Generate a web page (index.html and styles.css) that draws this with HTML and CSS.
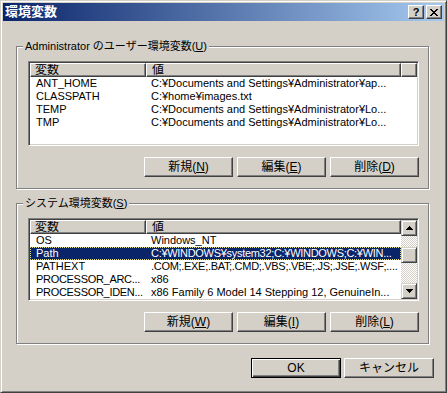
FILE: index.html
```html
<!DOCTYPE html>
<html lang="ja">
  <head>
    <meta charset="UTF-8" />
    <title>環境変数</title>
    <link rel="stylesheet" href="styles.css">
  </head>
  <body>
    <div class="window">
      <div class="titlebar">
        <span class="title">環境変数</span>
        <div class="caption-btns">
          <button class="cap-btn">?</button>
          <button class="cap-btn">
            <svg width="8" height="7" viewBox="0 0 8 7" shape-rendering="crispEdges">
              <path d="M0 0h2v1h1v1h2V1h1V0h2v1H7v1H6v1H5v1h1v1h1v1h1v1H6V6H5V5H3v1H2v1H0V6h1V5h1V4h1V3H2V2H1V1H0z" />
            </svg>
          </button>
        </div>
      </div>

      <div class="dialog">
        <!-- User variables -->
        <fieldset class="group">
          <legend>Administrator のユーザー環境変数(<u>U</u>)</legend>
          <div class="listview user-list">
            <div class="lv-main">
              <div class="lv-head">
                <div class="hcell c1">変数</div>
                <div class="hcell c2">値</div>
                <div class="hcell fill"></div>
              </div>
              <div class="row"><span class="c1">ANT_HOME</span><span class="c2">C:¥Documents and Settings¥Administrator¥ap...</span></div>
              <div class="row"><span class="c1">CLASSPATH</span><span class="c2">C:¥home¥images.txt</span></div>
              <div class="row"><span class="c1">TEMP</span><span class="c2">C:¥Documents and Settings¥Administrator¥Lo...</span></div>
              <div class="row"><span class="c1">TMP</span><span class="c2">C:¥Documents and Settings¥Administrator¥Lo...</span></div>
            </div>
          </div>
          <div class="btn-row">
            <button class="btn">新規(<u>N</u>)</button>
            <button class="btn">編集(<u>E</u>)</button>
            <button class="btn">削除(<u>D</u>)</button>
          </div>
        </fieldset>

        <!-- System variables -->
        <fieldset class="group">
          <legend>システム環境変数(<u>S</u>)</legend>
          <div class="listview sys-list">
            <div class="lv-main">
              <div class="lv-head">
                <div class="hcell c1">変数</div>
                <div class="hcell c2">値</div>
              </div>
              <div class="row"><span class="c1">OS</span><span class="c2">Windows_NT</span></div>
              <div class="row sel"><span class="c1">Path</span><span class="c2 tight">C:¥WINDOWS¥system32;C:¥WINDOWS;C:¥WIN...</span></div>
              <div class="row"><span class="c1">PATHEXT</span><span class="c2 tight">.COM;.EXE;.BAT;.CMD;.VBS;.VBE;.JS;.JSE;.WSF;....</span></div>
              <div class="row"><span class="c1 tight">PROCESSOR_ARC...</span><span class="c2">x86</span></div>
              <div class="row"><span class="c1 tight">PROCESSOR_IDEN...</span><span class="c2">x86 Family 6 Model 14 Stepping 12, GenuineIn...</span></div>
              <div class="row"><span class="c1 tight">PROCESSOR_LEVEL</span><span class="c2">6</span></div>
            </div>
            <div class="scrollbar">
              <div class="sb-btn">
                <svg width="7" height="4" viewBox="0 0 7 4" shape-rendering="crispEdges"><path d="M3 0h1v1h1v1h1v1h1v1H0V3h1V2h1V1h1z" /></svg>
              </div>
              <div class="sb-track"><div class="sb-thumb"></div></div>
              <div class="sb-btn">
                <svg width="7" height="4" viewBox="0 0 7 4" shape-rendering="crispEdges"><path d="M0 0h7v1H6v1H5v1H4v1H3V3H2V2H1V1H0z" /></svg>
              </div>
            </div>
          </div>
          <div class="btn-row">
            <button class="btn">新規(<u>W</u>)</button>
            <button class="btn">編集(<u>I</u>)</button>
            <button class="btn">削除(<u>L</u>)</button>
          </div>
        </fieldset>

        <div class="footer">
          <button class="btn default">OK</button>
          <button class="btn">キャンセル</button>
        </div>
      </div>
    </div>
  </body>
</html>
```

FILE: styles.css
```css
body {
  margin: 0;
  font-family: "Liberation Sans", "Noto Sans CJK JP", sans-serif;
  font-size: 11px;
  color: #000;
  background: #d4d0c8;
}
.window {
  width: 447px;
  height: 393px;
  box-sizing: border-box;
  background: #d4d0c8;
  border: 1px solid;
  border-color: #d4d0c8 #404040 #404040 #d4d0c8;
  box-shadow: inset 1px 1px #fff, inset -1px -1px #808080;
  padding: 2px;
  display: flex;
  flex-direction: column;
}
.titlebar {
  height: 18px;
  display: flex;
  align-items: center;
  justify-content: space-between;
  padding: 0 2px;
  background: linear-gradient(to right, #0a246a, #a6caf0);
}
.title {
  color: #fff;
  font-weight: bold;
  font-size: 13px;
  line-height: 18px;
}
.caption-btns {
  display: flex;
  gap: 2px;
}
.cap-btn {
  width: 16px;
  height: 14px;
  box-sizing: border-box;
  padding: 0;
  background: #d4d0c8;
  border: 1px solid;
  border-color: #fff #404040 #404040 #fff;
  box-shadow: inset -1px -1px #808080;
  display: flex;
  align-items: center;
  justify-content: center;
  font: bold 11px "Liberation Sans", sans-serif;
  color: #000;
}

.dialog {
  padding: 18px 15px 0 13px;
}
.group {
  margin: 0;
  padding: 8px 9px 11px 11px;
  border: 1px solid #808080;
  box-shadow: inset 1px 1px #fff, 1px 1px #fff;
  min-width: 0;
}
.group + .group {
  margin-top: 7px;
}
.group legend {
  padding: 0 2px;
  margin-left: -5px;
  line-height: 14px;
  background: #d4d0c8;
}

.listview {
  box-sizing: border-box;
  display: flex;
  padding: 1px;
  background: #fff;
  border: 1px solid;
  border-color: #808080 #fff #fff #808080;
  box-shadow: inset 1px 1px #404040, inset -1px -1px #d4d0c8;
  overflow: hidden;
}
.user-list {
  height: 85px;
}
.sys-list {
  height: 83px;
}
.lv-main {
  flex: 1;
  min-width: 0;
  overflow: hidden;
}
.lv-head {
  display: flex;
  height: 14px;
}
.hcell {
  box-sizing: border-box;
  height: 14px;
  padding-left: 4px;
  font-size: 12px;
  line-height: 12px;
  background: #d4d0c8;
  border: 1px solid;
  border-color: #fff #404040 #404040 #fff;
  box-shadow: inset -1px -1px #808080;
  white-space: nowrap;
  overflow: hidden;
}
.hcell.c1 {
  width: 116px;
}
.hcell.c2 {
  width: 255px;
  padding-left: 5px;
}
.hcell.fill {
  flex: 1;
}
.row {
  display: flex;
  height: 13px;
  line-height: 13px;
  white-space: nowrap;
}
.row span {
  box-sizing: border-box;
  overflow: hidden;
}
.row .c1 {
  width: 116px;
  padding-left: 6px;
}
.row .c2 {
  width: 255px;
  padding-left: 5px;
}
.row .tight {
  letter-spacing: -0.3px;
}
.row.sel {
  width: 371px;
  background: #0a246a;
  color: #fff;
  outline: 1px dotted #dede80;
  outline-offset: -1px;
}

.scrollbar {
  width: 16px;
  flex-shrink: 0;
  display: flex;
  flex-direction: column;
}
.sb-btn,
.sb-thumb {
  height: 16px;
  box-sizing: border-box;
  background: #d4d0c8;
  border: 1px solid;
  border-color: #d4d0c8 #404040 #404040 #d4d0c8;
  box-shadow: inset 1px 1px #fff, inset -1px -1px #808080;
}
.sb-btn {
  display: flex;
  align-items: center;
  justify-content: center;
}
.sb-track {
  flex: 1;
  background-color: #fff;
  background-image: repeating-conic-gradient(#d4d0c8 0 25%, #fff 0 50%);
  background-size: 2px 2px;
}
.sb-thumb {
  margin-top: 11px;
}

.btn-row {
  display: flex;
  justify-content: flex-end;
  gap: 4px;
  margin-top: 11px;
}
.btn {
  width: 89px;
  height: 20px;
  box-sizing: border-box;
  padding: 0;
  font: inherit;
  font-size: 12px;
  line-height: 18px;
  color: #000;
  background: #d4d0c8;
  border: 1px solid;
  border-color: #fff #404040 #404040 #fff;
  box-shadow: inset -1px -1px #808080;
}
.btn.default {
  border-color: #000;
  box-shadow: inset 1px 1px #fff, inset -1px -1px #404040, inset -2px -2px #808080;
}
.footer {
  display: flex;
  justify-content: flex-end;
  gap: 3px;
  margin-top: 14px;
  margin-right: -5px;
}
.footer .btn {
  width: 90px;
}
```
